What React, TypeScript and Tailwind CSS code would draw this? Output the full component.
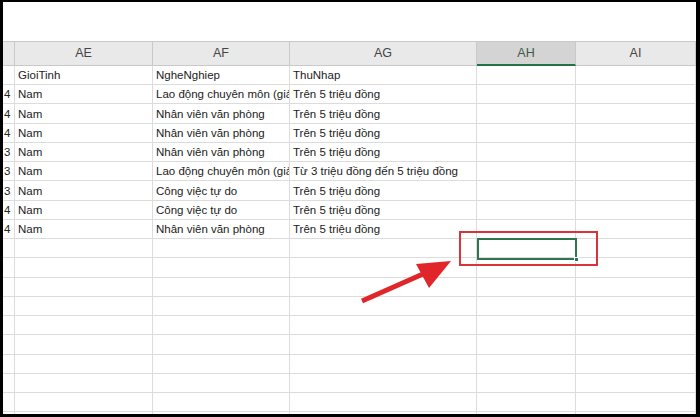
const cols = [
  { key: "AD", w: "w-[12px]" },
  { key: "AE", w: "w-[138px]" },
  { key: "AF", w: "w-[137px]" },
  { key: "AG", w: "w-[187px]" },
  { key: "AH", w: "w-[99px]" },
  { key: "AI", w: "flex-1" },
];

const rows: string[][] = [
  ["", "GioiTinh", "NgheNghiep", "ThuNhap", "", ""],
  ["4", "Nam", "Lao động chuyên môn (giảng viên, bác sĩ...)", "Trên 5 triệu đồng", "", ""],
  ["4", "Nam", "Nhân viên văn phòng", "Trên 5 triệu đồng", "", ""],
  ["4", "Nam", "Nhân viên văn phòng", "Trên 5 triệu đồng", "", ""],
  ["3", "Nam", "Nhân viên văn phòng", "Trên 5 triệu đồng", "", ""],
  ["3", "Nam", "Lao động chuyên môn (giảng viên, bác sĩ...)", "Từ 3 triệu đồng đến 5 triệu đồng", "", ""],
  ["3", "Nam", "Công việc tự do", "Trên 5 triệu đồng", "", ""],
  ["4", "Nam", "Công việc tự do", "Trên 5 triệu đồng", "", ""],
  ["4", "Nam", "Nhân viên văn phòng", "Trên 5 triệu đồng", "", ""],
];

const emptyRows = 10;

function Row({ cells, first }: { cells: string[]; first?: boolean }) {
  return (
    <div className={`flex shrink-0 ${first ? "h-[19px]" : "h-[19.25px]"}`}>
      {cols.map((c, i) => (
        <div
          key={c.key}
          className={`${c.w} flex shrink-0 items-end border-r border-b border-[#dcdcdc] pb-[2px] text-[11.5px] leading-[14px] text-[#222] whitespace-nowrap ${
            i === 0 ? "justify-start pl-[1px] overflow-hidden" : i === 3 ? "pl-[3px] overflow-visible" : "pl-[3px] overflow-hidden"
          }`}
        >
          {cells[i]}
        </div>
      ))}
    </div>
  );
}

export default function App() {
  return (
    <div
      className="relative h-[417px] w-[700px] overflow-hidden bg-black pt-[2px] pr-[4px] pb-[3px] pl-[3px]"
      style={{ fontFamily: '"Liberation Sans", Arial, sans-serif' }}
    >
      <div className="relative flex h-full flex-col overflow-hidden bg-white">
        {/* ribbon area (blank) */}
        <div className="h-[40px] shrink-0 border-b border-[#c8c8c8] bg-white" />

        {/* column headers */}
        <div className="flex h-[24px] shrink-0 bg-[#e9e9e9]">
          {cols.map((c) => (
            <div
              key={c.key}
              className={`${c.w} flex shrink-0 items-center justify-center border-r border-[#c9c9c9] text-[12.5px] ${
                c.key === "AH"
                  ? "border-b-2 border-b-[#217346] bg-[#d4d4d4] text-[#3d5a48]"
                  : "border-b border-b-[#c9c9c9] text-[#444]"
              }`}
            >
              {c.key === "AD" ? "" : c.key}
            </div>
          ))}
        </div>

        {rows.map((r, i) => (
          <Row key={i} cells={r} first={i === 0} />
        ))}
        {Array.from({ length: emptyRows }).map((_, i) => (
          <Row key={"e" + i} cells={["", "", "", "", "", ""]} />
        ))}

        {/* selected cell */}
        <div className="absolute top-[236px] left-[474px] h-[22px] w-[100px] border-2 border-[#2f7650]">
          <div className="absolute right-[-4px] bottom-[-4px] h-[5px] w-[5px] border border-white bg-[#2f7650]" />
        </div>

        {/* red highlight */}
        <div className="absolute top-[229px] left-[456px] h-[35px] w-[139px] border-2 border-[#d9343a]" />
      </div>

      {/* red arrow */}
      <svg className="absolute top-0 left-0" width="700" height="417" viewBox="0 0 700 417">
        <line x1="362" y1="301" x2="432" y2="270" stroke="#e0262b" strokeWidth="5" />
        <polygon points="451,261 416,264 429,288" fill="#e0262b" />
      </svg>
    </div>
  );
}
